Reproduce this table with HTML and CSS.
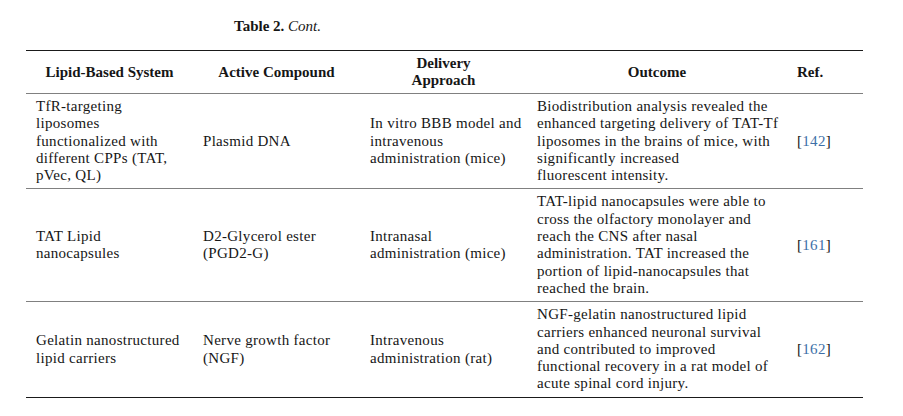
FILE: index.html
```html
<!DOCTYPE html>
<html>
<head>
<meta charset="utf-8">
<link rel="stylesheet" href="styles.css">
</head>
<body>
<div class="page">
  <p class="caption"><b>Table 2.</b> <i>Cont.</i></p>
  <table class="data">
    <colgroup>
      <col class="c1"><col class="c2"><col class="c3"><col class="c4"><col class="c5">
    </colgroup>
    <thead>
      <tr>
        <th>Lipid-Based System</th>
        <th>Active Compound</th>
        <th>Delivery<br>Approach</th>
        <th>Outcome</th>
        <th class="ref">Ref.</th>
      </tr>
    </thead>
    <tbody>
      <tr>
        <td>TfR-targeting<br>liposomes<br>functionalized with<br>different CPPs (TAT,<br>pVec, QL)</td>
        <td>Plasmid DNA</td>
        <td>In vitro BBB model and<br>intravenous<br>administration (mice)</td>
        <td>Biodistribution analysis revealed the<br>enhanced targeting delivery of TAT-Tf<br>liposomes in the brains of mice, with<br>significantly increased<br>fluorescent intensity.</td>
        <td>[<span class="link">142</span>]</td>
      </tr>
      <tr>
        <td>TAT Lipid<br>nanocapsules</td>
        <td>D2-Glycerol ester<br>(PGD2-G)</td>
        <td>Intranasal<br>administration (mice)</td>
        <td>TAT-lipid nanocapsules were able to<br>cross the olfactory monolayer and<br>reach the CNS after nasal<br>administration. TAT increased the<br>portion of lipid-nanocapsules that<br>reached the brain.</td>
        <td>[<span class="link">161</span>]</td>
      </tr>
      <tr class="last">
        <td>Gelatin nanostructured<br>lipid carriers</td>
        <td>Nerve growth factor<br>(NGF)</td>
        <td>Intravenous<br>administration (rat)</td>
        <td>NGF-gelatin nanostructured lipid<br>carriers enhanced neuronal survival<br>and contributed to improved<br>functional recovery in a rat model of<br>acute spinal cord injury.</td>
        <td>[<span class="link">162</span>]</td>
      </tr>
    </tbody>
  </table>
</div>
</body>
</html>
```

FILE: styles.css
```css
html, body {
  margin: 0;
  padding: 0;
  background: #ffffff;
}
body {
  font-family: "Liberation Serif", "Times New Roman", serif;
  color: #161616;
  font-size: 15px;
}
.page {
  padding: 17px 0 0 26px;
}
.caption {
  margin: 0 0 15px 208px;
  font-size: 15px;
  line-height: 18px;
}
.caption b {
  font-weight: bold;
}
.data {
  border-collapse: collapse;
  table-layout: fixed;
  width: 837px;
  border-top: 1.5px solid #1a1a1a;
  border-bottom: 1.5px solid #1a1a1a;
}
.c1 { width: 167px; }
.c2 { width: 167px; }
.c3 { width: 167px; }
.c4 { width: 260px; }
.c5 { width: 76px; }
.data th {
  font-weight: bold;
  text-align: center;
  line-height: 17px;
  padding: 4px 10px;
  height: 34px;
  border-bottom: 1px solid #808080;
  white-space: nowrap;
}
.data th.ref {
  text-align: left;
}
.data td {
  text-align: left;
  vertical-align: middle;
  line-height: 17.3px;
  letter-spacing: 0.3px;
  padding: 4px 0 4px 10px;
  white-space: nowrap;
  border-bottom: 1px solid #808080;
}
.data tr.last td {
  border-bottom: none;
}
.link {
  color: #3d6fa8;
}
```
